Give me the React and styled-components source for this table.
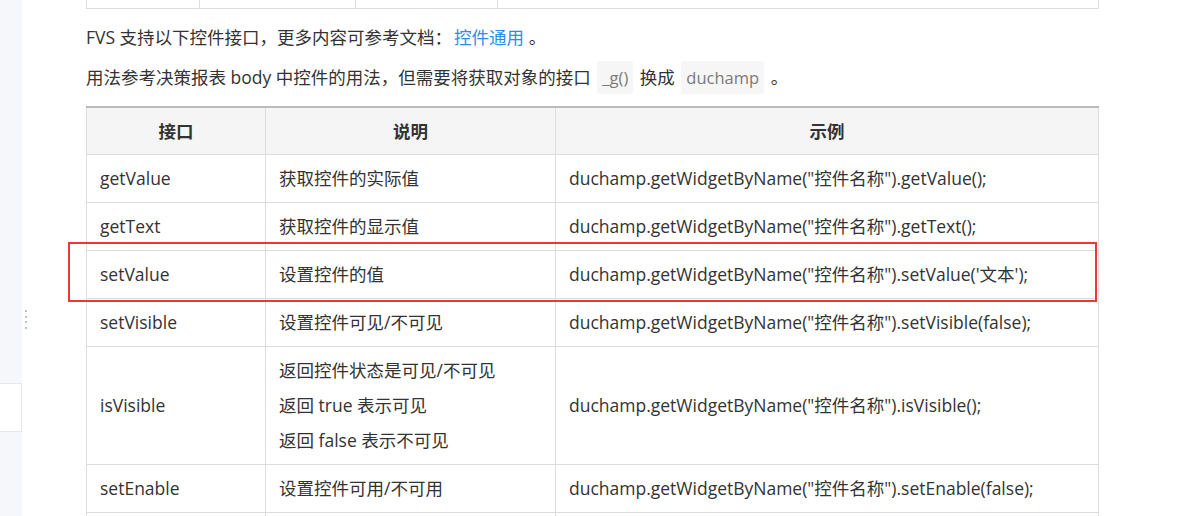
import React from 'react';
import styled, { createGlobalStyle } from 'styled-components';

const GlobalStyle = createGlobalStyle`
    html, body {
        margin: 0;
        padding: 0;
        height: 516px;
        overflow: hidden;
        background: #ffffff;
    }
    body {
        font-family: "Open Sans", "Noto Sans CJK SC", sans-serif;
        font-size: 17.5px;
        color: #333333;
    }
`;

const rows = [
    { name: 'getValue', desc: ['获取控件的实际值'], code: 'duchamp.getWidgetByName("控件名称").getValue();' },
    { name: 'getText', desc: ['获取控件的显示值'], code: 'duchamp.getWidgetByName("控件名称").getText();' },
    { name: 'setValue', desc: ['设置控件的值'], code: "duchamp.getWidgetByName(\"控件名称\").setValue('文本');" },
    { name: 'setVisible', desc: ['设置控件可见/不可见'], code: 'duchamp.getWidgetByName("控件名称").setVisible(false);' },
    {
        name: 'isVisible',
        desc: ['返回控件状态是可见/不可见', '返回 true 表示可见', '返回 false 表示不可见'],
        code: 'duchamp.getWidgetByName("控件名称").isVisible();'
    },
    { name: 'setEnable', desc: ['设置控件可用/不可用'], code: 'duchamp.getWidgetByName("控件名称").setEnable(false);' },
];

const App = () => {
    return (
        <Page>
            <GlobalStyle />
            <Sidebar>
                <SideTop />
                <SideCard />
                <SideRest />
            </Sidebar>
            <Gutter>
                <Handle>
                    <Dot /><Dot /><Dot /><Dot />
                </Handle>
            </Gutter>
            <Content>
                <PrevTable>
                    <PrevCell w={113} />
                    <PrevCell w={156} />
                    <PrevCell w={142} />
                    <PrevCell w={602} last />
                </PrevTable>
                <Para first>
                    FVS 支持以下控件接口，更多内容可参考文档：<Link>控件通用</Link> 。
                </Para>
                <Para>
                    用法参考决策报表 body 中控件的用法，但需要将获取对象的接口 <Code>_g()</Code> 换成 <Code>duchamp</Code> 。
                </Para>
                <TableWrap>
                    <Table>
                        <colgroup>
                            <col style={{ width: 179 }} />
                            <col style={{ width: 290 }} />
                            <col />
                        </colgroup>
                        <thead>
                            <tr>
                                <Th>接口</Th>
                                <Th>说明</Th>
                                <Th>示例</Th>
                            </tr>
                        </thead>
                        <tbody>
                            {rows.map((r) => (
                                <tr key={r.name}>
                                    <Td>{r.name}</Td>
                                    <Td>
                                        {r.desc.map((d, i) => (
                                            <React.Fragment key={i}>
                                                {i > 0 && <br />}
                                                {d}
                                            </React.Fragment>
                                        ))}
                                    </Td>
                                    <Td>{r.code}</Td>
                                </tr>
                            ))}
                            <tr>
                                <EmptyTd />
                                <EmptyTd />
                                <EmptyTd />
                            </tr>
                        </tbody>
                    </Table>
                    <Highlight />
                </TableWrap>
            </Content>
        </Page>
    );
};

export default App;

const Page = styled.div`
    display: flex;
    width: 1203px;
    height: 516px;
    overflow: hidden;
`;

const Sidebar = styled.div`
    width: 22px;
    flex-shrink: 0;
    display: flex;
    flex-direction: column;
`;

const SideTop = styled.div`
    height: 383px;
    background: #f6f7fb;
`;

const SideCard = styled.div`
    height: 47px;
    background: #ffffff;
    border: 1px solid #e6e7ea;
    border-left: none;
`;

const SideRest = styled.div`
    flex: 1;
    background: #f6f7fb;
`;

const Gutter = styled.div`
    width: 64px;
    flex-shrink: 0;
    padding-top: 310px;
    padding-left: 3px;
    box-sizing: border-box;
`;

const Handle = styled.div`
    display: flex;
    flex-direction: column;
    gap: 3.5px;
`;

const Dot = styled.span`
    width: 2px;
    height: 2px;
    background: #b9c2cf;
`;

const Content = styled.div`
    width: 1013px;
    flex-shrink: 0;
`;

const PrevTable = styled.div`
    display: flex;
    height: 9px;
    border-left: 1px solid #dddddd;
    border-bottom: 1px solid #dddddd;
    box-sizing: border-box;
`;

const PrevCell = styled.div`
    width: ${(p) => p.w}px;
    box-sizing: border-box;
    border-right: 1px solid #dddddd;
    flex-shrink: 0;
    ${(p) => p.last && 'flex: 1;'}
`;

const Para = styled.p`
    margin: ${(p) => (p.first ? '13px' : '10px')} 0 0;
    line-height: 30px;
    white-space: nowrap;
`;

const Link = styled.a`
    color: #2d8cf0;
    text-decoration: none;
    margin-left: 2px;
`;

const Code = styled.code`
    font-family: "Open Sans", "Noto Sans CJK SC", sans-serif;
    font-size: 16.5px;
    color: #7a7a7a;
    background: #f6f6f6;
    padding: 5px 5px;
    margin: 0 2px;
    border-radius: 2px;
`;

const TableWrap = styled.div`
    position: relative;
    margin-top: 13px;
`;

const Table = styled.table`
    width: 1013px;
    border-collapse: collapse;
    border-top: 2px solid #bbbbbb;
    table-layout: fixed;
`;

const Th = styled.th`
    background: #f5f5f5;
    border: 1px solid #dddddd;
    border-top: none;
    height: 46px;
    padding: 0 13px;
    font-weight: 700;
    text-align: center;
    line-height: 35px;
    color: #333333;
`;

const Td = styled.td`
    border: 1px solid #dddddd;
    padding: 6px 13px;
    line-height: 35px;
    text-align: left;
    vertical-align: middle;
    white-space: nowrap;
`;

const EmptyTd = styled.td`
    border: 1px solid #dddddd;
    height: 47px;
    padding: 0;
`;

const Highlight = styled.div`
    position: absolute;
    left: -18px;
    top: 136px;
    width: 1029px;
    height: 60px;
    border: 2px solid #ee3636;
    box-sizing: border-box;
    pointer-events: none;
`;
